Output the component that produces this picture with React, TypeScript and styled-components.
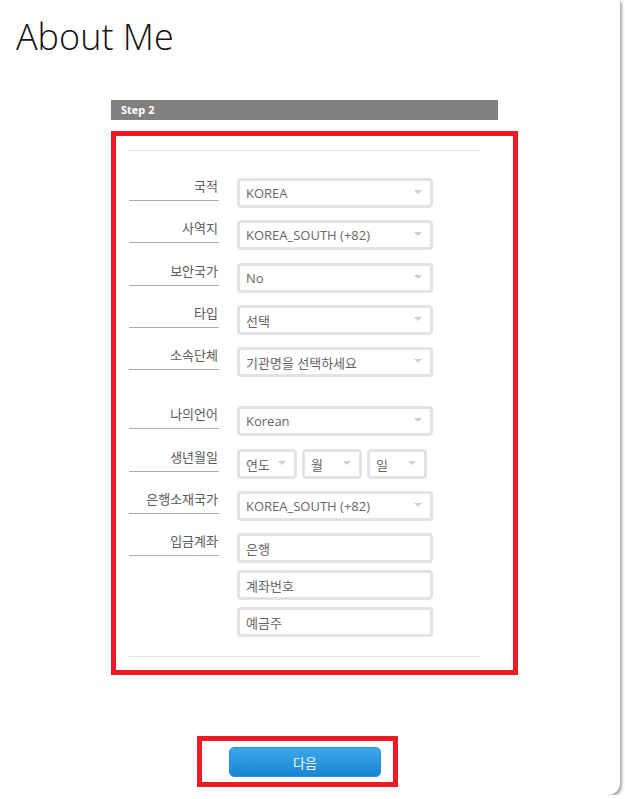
import React from "react";
import styled, { createGlobalStyle } from "styled-components";

const Global = createGlobalStyle`
  html, body { margin: 0; padding: 0; background: #ffffff; }
  body { font-family: "Open Sans", "Noto Sans CJK KR", sans-serif; }
  * { box-sizing: border-box; }
`;

const Card = styled.div`
  width: 620px;
  height: 795px;
  background: #fff;
  border-bottom-right-radius: 12px;
  box-shadow: 2px 2px 3px rgba(0, 0, 0, 0.35);
  position: relative;
  overflow: hidden;
`;

const Title = styled.h1`
  margin: 0;
  padding: 14px 0 0 16px;
  font-family: "Open Sans", "Noto Sans", sans-serif;
  font-weight: 300;
  font-size: 36px;
  line-height: 46px;
  color: #111;
`;

const StepBar = styled.div`
  margin: 40px 0 0 111px;
  width: 387px;
  height: 20px;
  background: #808080;
  color: #fff;
  font-family: "Open Sans", sans-serif;
  font-weight: 700;
  font-size: 11px;
  line-height: 20px;
  padding-left: 10px;
`;

const FormBox = styled.div`
  margin: 11px 0 0 111px;
  width: 407px;
  border: 5px solid #ed1c24;
  padding: 14px 33px 13px 13px;
`;

const Rule = styled.div`
  height: 1px;
  background: #e3e3e3;
`;

const Fields = styled.div`
  display: flex;
  flex-direction: column;
  padding: 27px 0 19px 0;
`;

const Row = styled.div<{ $gap: number }>`
  display: flex;
  align-items: flex-start;
  gap: 18px;
  margin-bottom: ${(p) => p.$gap}px;
`;

const Label = styled.div`
  width: 90px;
  height: 23px;
  border-bottom: 1px solid #ababab;
  text-align: right;
  font-family: "Noto Sans CJK KR", sans-serif;
  font-size: 13px;
  line-height: 16px;
  color: #5a5a5a;
  padding-right: 1px;
`;

const Controls = styled.div`
  display: flex;
  flex-direction: column;
  gap: 7px;
`;

const Inline = styled.div`
  display: flex;
  gap: 5px;
`;

const SelectBox = styled.div<{ $w: number }>`
  width: ${(p) => p.$w}px;
  height: 30px;
  border: 3px solid #e3e3e3;
  border-radius: 4px;
  background: #fff;
  display: flex;
  align-items: center;
  padding: 0 8px 0 6px;
  font-family: "Open Sans", "Noto Sans CJK KR", sans-serif;
  font-size: 13px;
  color: #666;
`;

const SelectText = styled.span`
  flex: 1;
  white-space: nowrap;
  overflow: hidden;
`;

const Arrow = styled.span`
  width: 0;
  height: 0;
  border-left: 4px solid transparent;
  border-right: 4px solid transparent;
  border-top: 4px solid #cfcfcf;
  margin-top: -2px;
`;

const TextBox = styled.div`
  width: 196px;
  height: 30px;
  border: 3px solid #e3e3e3;
  border-radius: 4px;
  background: #fff;
  display: flex;
  align-items: center;
  padding: 0 6px;
  font-family: "Noto Sans CJK KR", sans-serif;
  font-size: 13px;
  color: #666;
`;

const ButtonOutline = styled.div`
  margin: 61px 0 0 197px;
  width: 201px;
  height: 51px;
  border: 5px solid #ed1c24;
  padding: 6px 12px 0 27px;
`;

const NextButton = styled.button`
  width: 152px;
  height: 30px;
  border: 1px solid #2a8fd8;
  border-radius: 5px;
  background: linear-gradient(#3aa9e9, #1a84d5);
  color: #fff;
  font-family: "Noto Sans CJK KR", sans-serif;
  font-size: 13px;
  padding: 0;
  cursor: pointer;
`;

const Select = ({ value, w = 196 }: { value: string; w?: number }) => (
  <SelectBox $w={w}>
    <SelectText>{value}</SelectText>
    <Arrow />
  </SelectBox>
);

export default function App() {
  return (
    <>
      <Global />
      <Card>
        <Title>About Me</Title>
        <StepBar>Step 2</StepBar>
        <FormBox>
          <Rule />
          <Fields>
            <Row $gap={12}>
              <Label>국적</Label>
              <Select value="KOREA" />
            </Row>
            <Row $gap={13}>
              <Label>사역지</Label>
              <Select value="KOREA_SOUTH (+82)" />
            </Row>
            <Row $gap={12}>
              <Label>보안국가</Label>
              <Select value="No" />
            </Row>
            <Row $gap={12}>
              <Label>타입</Label>
              <Select value="선택" />
            </Row>
            <Row $gap={29}>
              <Label>소속단체</Label>
              <Select value="기관명을 선택하세요" />
            </Row>
            <Row $gap={13}>
              <Label>나의언어</Label>
              <Select value="Korean" />
            </Row>
            <Row $gap={12}>
              <Label>생년월일</Label>
              <Inline>
                <Select value="연도" w={60} />
                <Select value="월" w={60} />
                <Select value="일" w={60} />
              </Inline>
            </Row>
            <Row $gap={12}>
              <Label>은행소재국가</Label>
              <Select value="KOREA_SOUTH (+82)" />
            </Row>
            <Row $gap={0}>
              <Label>입금계좌</Label>
              <Controls>
                <TextBox>은행</TextBox>
                <TextBox>계좌번호</TextBox>
                <TextBox>예금주</TextBox>
              </Controls>
            </Row>
          </Fields>
          <Rule />
        </FormBox>
        <ButtonOutline>
          <NextButton>다음</NextButton>
        </ButtonOutline>
      </Card>
    </>
  );
}
